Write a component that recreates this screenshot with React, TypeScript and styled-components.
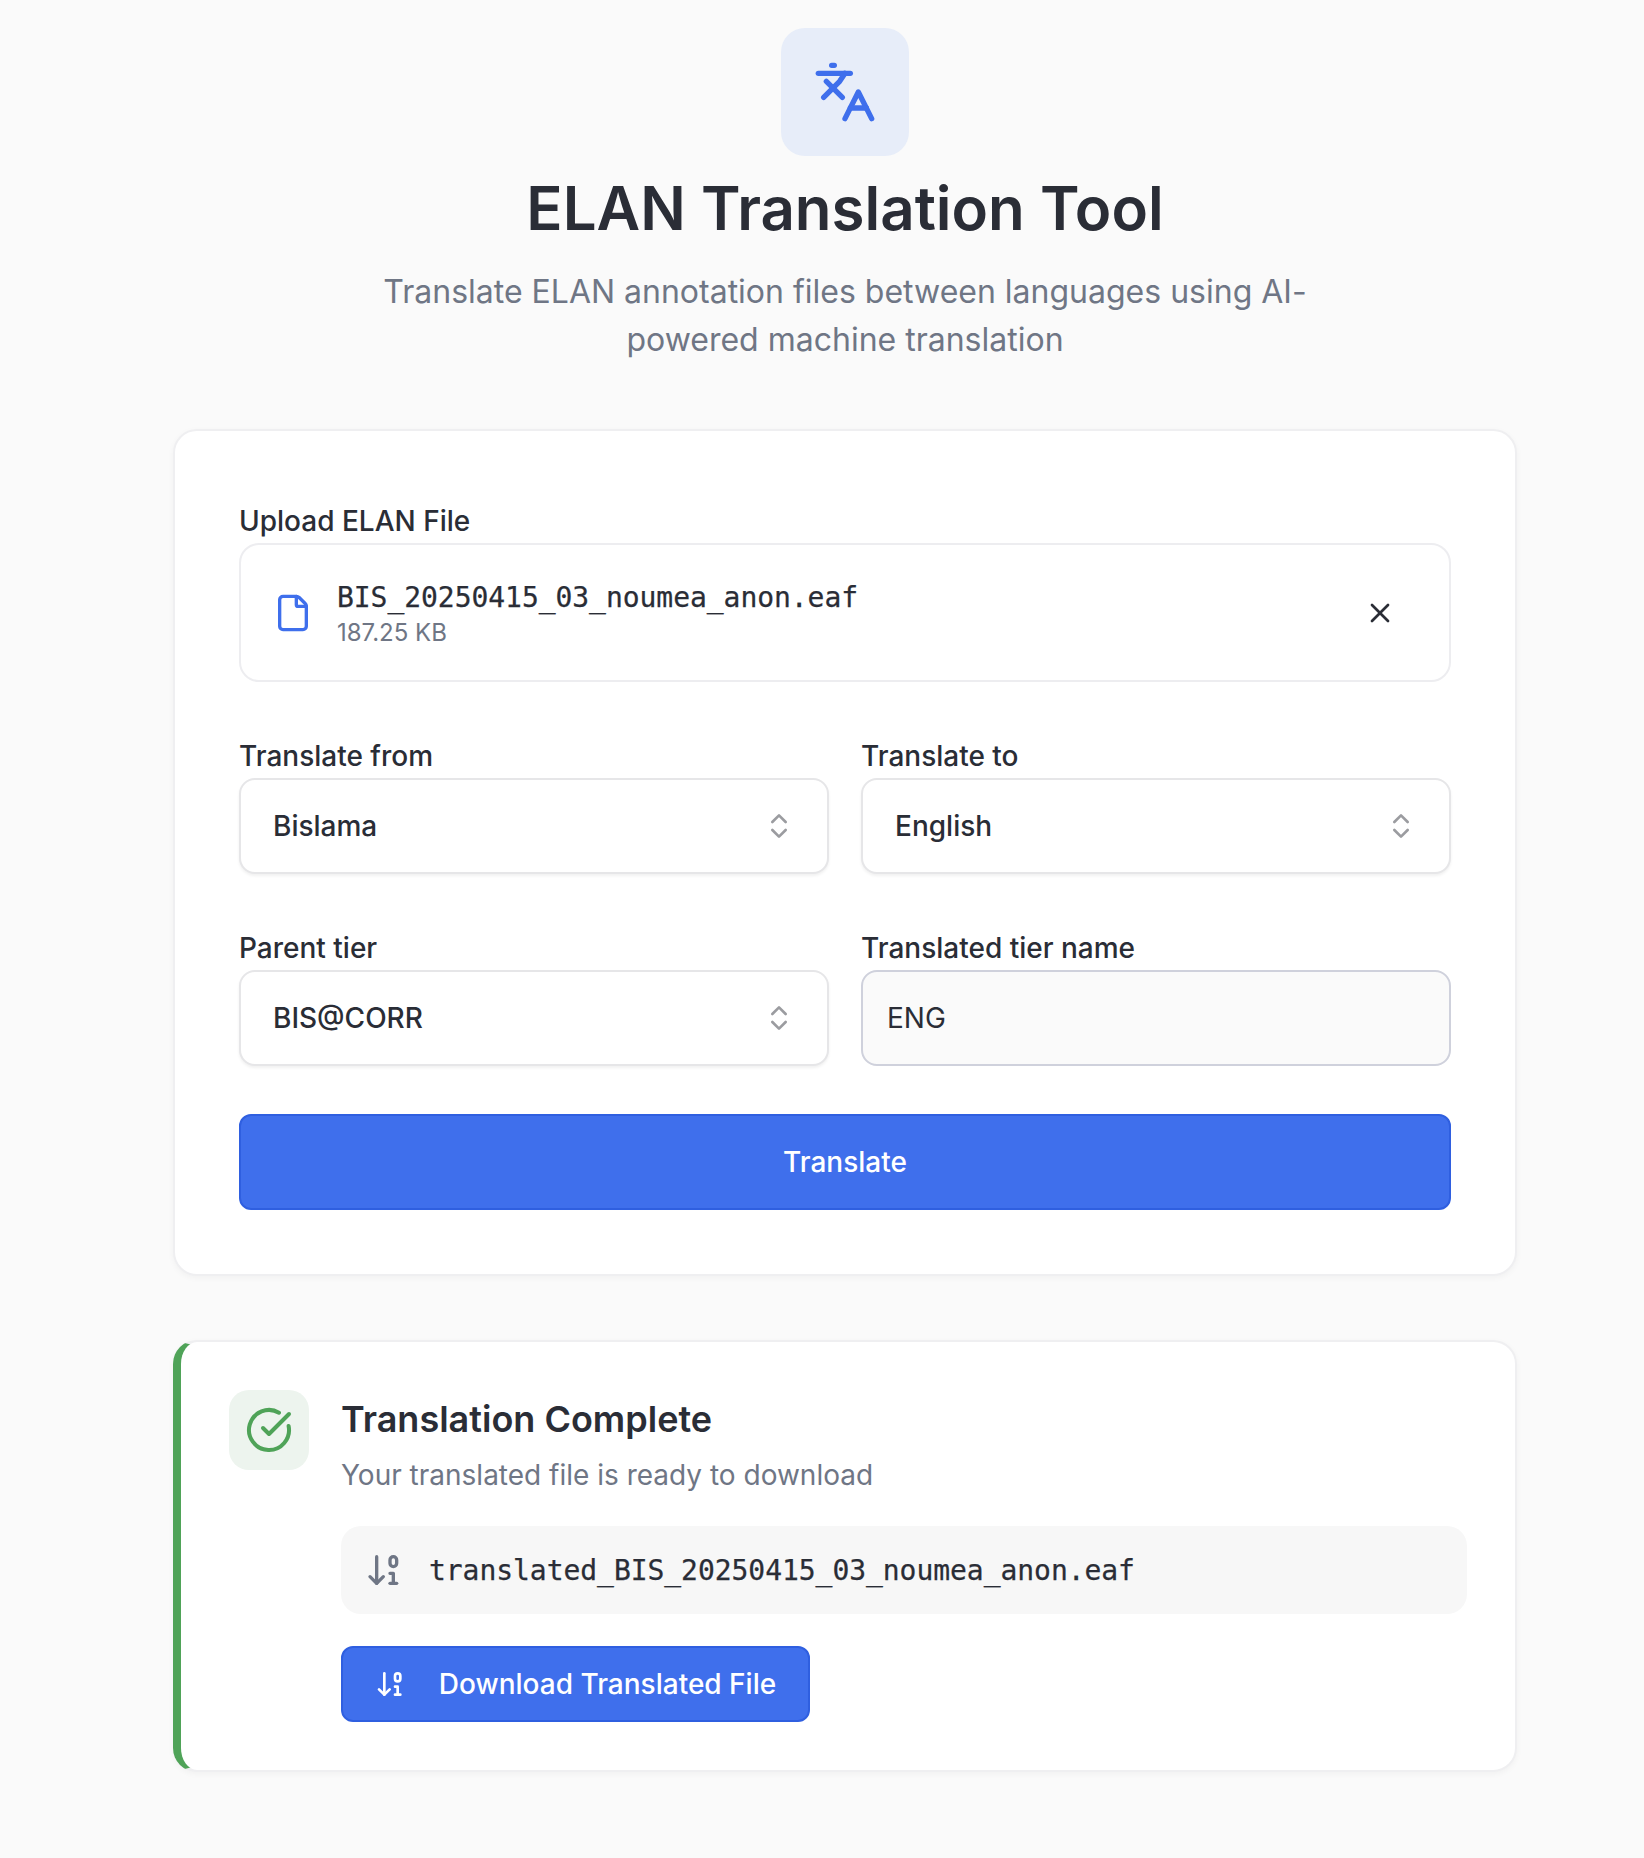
import React from 'react';
import styled, { createGlobalStyle } from 'styled-components';
import { ArrowDown01, ChevronsUpDown, CircleCheckBig, File as FileIcon, Languages, X } from 'lucide-react';

const GlobalStyle = createGlobalStyle`
  html, body {
    margin: 0;
    padding: 0;
    background: #fafafa;
  }
  body {
    font-family: Inter, "Liberation Sans", sans-serif;
    color: #2a2d36;
  }
`;

const Page = styled.div`
  box-sizing: border-box;
  width: 1644px;
  height: 1858px;
  padding: 28px 127px 0 173px;
  display: flex;
  flex-direction: column;
`;

const Header = styled.header`
  display: flex;
  flex-direction: column;
  align-items: center;
  margin-bottom: 65px;
`;

const LogoBox = styled.div`
  width: 128px;
  height: 128px;
  border-radius: 24px;
  background: #e7edf9;
  color: #3f6fec;
  display: flex;
  align-items: center;
  justify-content: center;
`;

const Title = styled.h1`
  margin: 16px 0 0;
  font-size: 60px;
  line-height: 72px;
  font-weight: 600;
  color: #2a2d36;
`;

const Subtitle = styled.p`
  margin: 24px 0 0;
  width: 960px;
  text-align: center;
  font-size: 32px;
  line-height: 48px;
  color: #6f7685;
`;

const Card = styled.section`
  box-sizing: border-box;
  background: #fff;
  border: 2px solid #efeff1;
  border-radius: 24px;
  box-shadow: 0 2px 6px rgba(0, 0, 0, 0.04);
  padding: 72px 64px 64px;
  display: flex;
  flex-direction: column;
  margin-bottom: 64px;
`;

const Label = styled.label`
  display: block;
  font-size: 28px;
  line-height: 36px;
  font-weight: 500;
  color: #2a2d36;
  margin-bottom: 4px;
`;

const FileBox = styled.div`
  box-sizing: border-box;
  height: 139px;
  border: 2px solid #ededf0;
  border-radius: 20px;
  padding: 0 53px 0 32px;
  display: flex;
  align-items: center;
  gap: 24px;
  color: #3f6fec;
  margin-bottom: 56px;
`;

const FileInfo = styled.div`
  flex: 1;
  display: flex;
  flex-direction: column;
`;

const FileName = styled.span`
  font-family: "DejaVu Sans Mono", "Liberation Mono", monospace;
  font-size: 28px;
  letter-spacing: -0.05px;
  line-height: 40px;
  color: #2a2d36;
  -webkit-text-stroke: 0.25px #2a2d36;
`;

const FileSize = styled.span`
  font-size: 24px;
  line-height: 30px;
  color: #6f7685;
`;

const CloseIcon = styled(X)`
  color: #2a2d36;
`;

const FieldGrid = styled.div`
  display: grid;
  grid-template-columns: 1fr 1fr;
  column-gap: 32px;
  row-gap: 56px;
  margin-bottom: 48px;
`;

const Field = styled.div`
  display: flex;
  flex-direction: column;
`;

const Select = styled.div`
  box-sizing: border-box;
  height: 96px;
  border: 2px solid #e6e6e8;
  border-radius: 16px;
  background: #fff;
  box-shadow: 0 2px 3px rgba(0, 0, 0, 0.06);
  padding: 0 32px;
  display: flex;
  align-items: center;
  justify-content: space-between;
  font-size: 28px;
  font-weight: 500;
  color: #2a2d36;
  svg {
    color: #9b9ca0;
  }
`;

const TextInput = styled.div`
  box-sizing: border-box;
  height: 96px;
  border: 2px solid #cfd1dc;
  border-radius: 16px;
  background: #fafafa;
  padding: 0 24px;
  display: flex;
  align-items: center;
  font-size: 28px;
  color: #2a2d36;
`;

const PrimaryButton = styled.button`
  box-sizing: border-box;
  border: 2px solid #2f5fe0;
  border-radius: 12px;
  background: #3f6fec;
  color: #fff;
  font-family: inherit;
  font-size: 28px;
  font-weight: 500;
  display: flex;
  align-items: center;
  justify-content: center;
`;

const TranslateButton = styled(PrimaryButton)`
  height: 96px;
  width: 100%;
`;

const DownloadButton = styled(PrimaryButton)`
  height: 76px;
  width: 469px;
  gap: 32px;
`;

const ResultCard = styled(Card)`
  border-left: 8px solid #4fa358;
  padding: 48px;
  flex-direction: row;
  gap: 32px;
  margin-bottom: 0;
`;

const SuccessBox = styled.div`
  flex: none;
  width: 80px;
  height: 80px;
  border-radius: 20px;
  background: #edf4ee;
  color: #4fa358;
  display: flex;
  align-items: center;
  justify-content: center;
`;

const ResultBody = styled.div`
  flex: 1;
  display: flex;
  flex-direction: column;
`;

const ResultTitle = styled.h2`
  margin: 2px 0 0;
  font-size: 36px;
  line-height: 54px;
  font-weight: 600;
  color: #2a2d36;
`;

const ResultText = styled.p`
  margin: 8px 0 30px;
  font-size: 28px;
  line-height: 42px;
  color: #6f7685;
`;

const OutputRow = styled.div`
  box-sizing: border-box;
  height: 88px;
  border-radius: 20px;
  background: #f7f7f7;
  padding: 0 24px;
  display: flex;
  align-items: center;
  gap: 24px;
  font-family: "DejaVu Sans Mono", "Liberation Mono", monospace;
  font-size: 28px;
  letter-spacing: -0.05px;
  color: #2a2d36;
  -webkit-text-stroke: 0.25px #2a2d36;
  margin-bottom: 32px;
  svg {
    color: #6f7685;
  }
`;

const App: React.FC = () => (
  <Page>
    <GlobalStyle />
    <Header>
      <LogoBox>
        <Languages size={64} strokeWidth={2} />
      </LogoBox>
      <Title>ELAN Translation Tool</Title>
      <Subtitle>Translate ELAN annotation files between languages using AI-powered machine translation</Subtitle>
    </Header>

    <Card>
      <Label>Upload ELAN File</Label>
      <FileBox>
        <FileIcon size={40} />
        <FileInfo>
          <FileName>BIS_20250415_03_noumea_anon.eaf</FileName>
          <FileSize>187.25 KB</FileSize>
        </FileInfo>
        <CloseIcon size={32} />
      </FileBox>

      <FieldGrid>
        <Field>
          <Label>Translate from</Label>
          <Select>
            Bislama
            <ChevronsUpDown size={32} />
          </Select>
        </Field>
        <Field>
          <Label>Translate to</Label>
          <Select>
            English
            <ChevronsUpDown size={32} />
          </Select>
        </Field>
        <Field>
          <Label>Parent tier</Label>
          <Select>
            BIS@CORR
            <ChevronsUpDown size={32} />
          </Select>
        </Field>
        <Field>
          <Label>Translated tier name</Label>
          <TextInput>ENG</TextInput>
        </Field>
      </FieldGrid>

      <TranslateButton>Translate</TranslateButton>
    </Card>

    <ResultCard>
      <SuccessBox>
        <CircleCheckBig size={48} />
      </SuccessBox>
      <ResultBody>
        <ResultTitle>Translation Complete</ResultTitle>
        <ResultText>Your translated file is ready to download</ResultText>
        <OutputRow>
          <ArrowDown01 size={40} />
          translated_BIS_20250415_03_noumea_anon.eaf
        </OutputRow>
        <DownloadButton>
          <ArrowDown01 size={32} />
          Download Translated File
        </DownloadButton>
      </ResultBody>
    </ResultCard>
  </Page>
);

export default App;
